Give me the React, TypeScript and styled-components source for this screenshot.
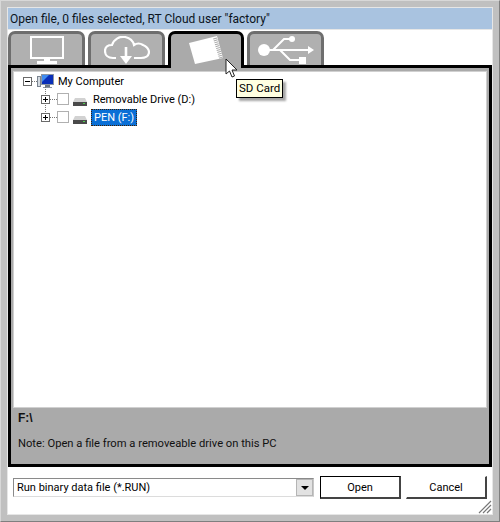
import React from 'react';
import styled, { createGlobalStyle } from 'styled-components';

const Global = createGlobalStyle`
  html, body { margin: 0; padding: 0; background: #c4c4c4; }
  * { box-sizing: border-box; }
`;

/* window shell */
const Frame = styled.div`
  position: relative; width: 500px; height: 522px; padding: 7px 7px 7px;
  background: #c0c0c0; border: 1px solid #7f7f7f; border-top-color: #d8d8d8; border-left-color: #d8d8d8;
  display: flex; flex-direction: column; overflow: hidden;
  font-family: Roboto, "Liberation Sans", Arial, sans-serif; font-size: 11px; color: #000;
`;
const TitleBar = styled.div`
  height: 22px; flex: none; background: #a9c3e0; padding-left: 2px;
  display: flex; align-items: center; font-size: 12px; color: #0b1420;
  box-shadow: 0 0 0 1px #e6e6e6;
`;
const Client = styled.div`
  flex: 1; background: #fff; display: flex; flex-direction: column; min-height: 0; position: relative;
  box-shadow: 0 0 0 1px #e6e6e6;
`;

/* tabs */
const TabRow = styled.div`
  height: 38px; flex: none; display: flex; gap: 3px; padding-top: 1px; position: relative; z-index: 1; margin-bottom: -3px;
`;
const Tab = styled.div<{ $active?: boolean; $w: number }>`
  width: ${p => p.$w}px; height: ${p => (p.$active ? 37 : 34)}px;
  background: ${p => (p.$active ? '#aaaaaa' : '#b0b0b0')};
  border: 3px solid ${p => (p.$active ? '#000' : '#6e6e6e')};
  border-bottom: 0;
  border-radius: 7px 7px 0 0;
  display: flex; align-items: flex-start; justify-content: center;
`;
const TabIcon = styled.svg`
  display: block; margin-top: 2px; flex: none;
`;

/* main panel */
const Panel = styled.div`
  height: 402px; flex: none; border: 3px solid #000; background: #aaaaaa;
  padding: 3px 2px 0; display: flex; flex-direction: column;
`;
const Tree = styled.div`
  height: 337px; flex: none; background: #fff; border: 1px solid #d0d0d0; padding: 0 0 0 9px;
`;
const TreeWrap = styled.div`
  position: relative;
`;
const TreeRow = styled.div<{ $indent: number }>`
  height: 18px; display: flex; align-items: center; padding-left: ${p => p.$indent}px;
`;
const Expander = styled.span`
  width: 9px; height: 9px; flex: none; border: 1px solid #6a6a6a; background: #fff; position: relative;
  &::before { content: ''; position: absolute; left: 1px; right: 1px; top: 3px; height: 1px; background: #000; }
`;
const PlusExpander = styled(Expander)`
  &::after { content: ''; position: absolute; top: 1px; bottom: 1px; left: 3px; width: 1px; background: #000; }
`;
const Dots = styled.span<{ $w: number }>`
  width: ${p => p.$w}px; flex: none; border-top: 1px dotted #777;
`;
const Check = styled.span`
  width: 12px; height: 12px; flex: none; background: #fff; border: 1px solid #b0b0b0; margin-right: 4px;
`;
const Label = styled.span<{ $selected?: boolean; $gap: number }>`
  padding: 1px ${p => (p.$selected ? 3 : 2)}px; margin-left: ${p => p.$gap}px; line-height: 15px; white-space: nowrap;
  ${p => (p.$selected ? 'background: #0a6fd6; color: #fff; outline: 1px dotted #402000; outline-offset: -1px;' : '')}
`;
const Connector = styled.span`
  position: absolute; left: 22px; top: 15px; height: 27px; width: 0; border-left: 1px dotted #777;
`;
const PathLabel = styled.div`
  font-family: "Liberation Sans", Arial, sans-serif;
  font-weight: bold; font-size: 12px; height: 15px; line-height: 15px; margin: 3px 0 0 5px; color: #111;
`;
const Note = styled.div`
  font-size: 11.2px; margin: 10px 0 0 5px; line-height: 15px; color: #111;
`;

/* bottom bar */
const BottomBar = styled.div`
  display: flex; align-items: center; padding: 9px 0 0 5px;
`;
const Combo = styled.div`
  width: 301px; height: 19px; border: 1px solid #8a8a8a; border-right-color: #c8c8c8; border-bottom-color: #dcdcdc;
  display: flex; align-items: center; justify-content: space-between; padding-left: 3px; background: #fff;
`;
const ComboArrow = styled.span`
  width: 17px; height: 17px; background: #e2e2e2; border: 1px solid #b5b5b5; display: flex; align-items: center; justify-content: center;
  &::after { content: ''; border: 4px solid transparent; border-top: 4px solid #000; border-bottom: 0; }
`;
const Button = styled.div<{ $primary?: boolean }>`
  width: 81px; height: 23px; background: #fff; display: flex; align-items: center; justify-content: center;
  margin-left: ${p => (p.$primary ? 6 : 5)}px;
  border: 1px solid ${p => (p.$primary ? '#000' : '#fff')};
  border-right: 2px solid #444; border-bottom: 2px solid #444;
`;

/* overlays */
const Grip = styled.svg`
  position: absolute; right: 0; bottom: 0;
`;
const Tooltip = styled.div`
  position: absolute; left: 235px; top: 78px; height: 19px; padding: 0 2px; z-index: 5;
  background: #ffffe1; border: 1px solid #000; box-shadow: 3px 3px 2px rgba(0,0,0,.35);
  font-size: 11.5px; line-height: 17px;
`;
const Cursor = styled.svg`
  position: absolute; left: 224px; top: 57px; z-index: 6;
`;
const TreeIcon = styled.svg`
  flex: none;
`;
const DriveSvg = styled.svg`
  flex: none; margin: 5px 1px 0 0;
`;

const MonitorIcon = () => (
  <TabIcon width="34" height="28" viewBox="0 0 34 28">
    <rect x="1" y="1" width="32" height="21" fill="none" stroke="#fff" strokeWidth="2" />
    <rect x="14" y="22" width="6" height="3" fill="#fff" />
    <rect x="7" y="25" width="20" height="3" fill="#fff" />
  </TabIcon>
);
const CloudIcon = () => (
  <TabIcon width="46" height="28" viewBox="0 0 46 28">
    <path d="M12 22H9C4 22 1 19 1 15C1 11 4 9 8 9C10 3 16 0 21 1C26 2 29 5 30 9C33 7 36 7 39 9C42 10 45 13 45 16C45 20 41 22 37 22H30"
      fill="none" stroke="#fff" strokeWidth="2.2" />
    <path d="M22 11V25" stroke="#fff" strokeWidth="2.6" />
    <path d="M16 20H28L22 28Z" fill="#fff" />
  </TabIcon>
);
const SdIcon = () => (
  <TabIcon width="34" height="28" viewBox="0 0 34 28">
    <path d="M0 7L28 0L34 22L6 28Z" fill="#fff" />
    <path d="M26 2L32 22" stroke="#a8a8a8" strokeWidth="4" strokeDasharray="1 1" />
  </TabIcon>
);
const UsbIcon = () => (
  <TabIcon width="56" height="28" viewBox="0 0 56 28">
    <circle cx="6" cy="14" r="6" fill="#fff" />
    <path d="M6 14H51" stroke="#fff" strokeWidth="2" />
    <path d="M50 10L56 14L50 18Z" fill="#fff" />
    <path d="M15 14L26 3H34M22 14L32 24H42" fill="none" stroke="#fff" strokeWidth="2" />
    <circle cx="34" cy="3" r="3" fill="#fff" />
    <rect x="41" y="21" width="7" height="7" fill="#fff" />
  </TabIcon>
);
const ComputerIcon = () => (
  <TreeIcon width="18" height="18" viewBox="0 0 18 18">
    <rect x="0.5" y="4.5" width="3" height="10" fill="#d4dae0" stroke="#7a8490" />
    <rect x="4.5" y="2.5" width="12" height="10" fill="#0a2fb8" stroke="#8b95a3" />
    <path d="M5 3H12L5 10Z" fill="#3f8bf0" />
    <rect x="8" y="13" width="5" height="2" fill="#6d7783" />
    <rect x="6" y="15" width="9" height="1" fill="#8b95a3" />
  </TreeIcon>
);
const DriveIcon = () => (
  <DriveSvg width="14" height="8" viewBox="0 0 14 8">
    <path d="M2 0H12L14 4H0Z" fill="#d2d2d2" />
    <rect x="0" y="4" width="14" height="4" fill="#4a4a4a" />
    <rect x="10" y="5" width="2" height="1" fill="#4fd04f" />
  </DriveSvg>
);

export default function App() {
  return (
    <Frame>
      <Global />
      <TitleBar>Open file, 0 files selected, RT Cloud user "factory"</TitleBar>
      <Client>
        <TabRow>
          <Tab $w={77}><MonitorIcon /></Tab>
          <Tab $w={77}><CloudIcon /></Tab>
          <Tab $w={76} $active><SdIcon /></Tab>
          <Tab $w={77}><UsbIcon /></Tab>
        </TabRow>
        <Panel>
          <Tree>
            <TreeWrap>
              <Connector />
              <TreeRow $indent={0}>
                <Expander /><Dots $w={5} /><ComputerIcon />
                <Label $gap={1}>My Computer</Label>
              </TreeRow>
              <TreeRow $indent={18}>
                <PlusExpander /><Dots $w={7} /><Check /><DriveIcon />
                <Label $gap={3}>Removable Drive (D:)</Label>
              </TreeRow>
              <TreeRow $indent={18}>
                <PlusExpander /><Dots $w={7} /><Check /><DriveIcon />
                <Label $selected $gap={3}>PEN (F:)</Label>
              </TreeRow>
            </TreeWrap>
          </Tree>
          <PathLabel>F:\</PathLabel>
          <Note>Note: Open a file from a removeable drive on this PC</Note>
        </Panel>
        <BottomBar>
          <Combo>Run binary data file (*.RUN)<ComboArrow /></Combo>
          <Button $primary>Open</Button>
          <Button>Cancel</Button>
        </BottomBar>
        <Grip width="14" height="14" viewBox="0 0 14 14">
          <path d="M1 13L13 1M5 13L13 5M9 13L13 9" stroke="#777" strokeWidth="1.2" />
        </Grip>
      </Client>
      <Tooltip>SD Card</Tooltip>
      <Cursor width="13" height="21" viewBox="0 0 13 21">
        <path d="M1 1V16L4.5 13L7 19L9.5 18L7 12H12Z" fill="#fff" stroke="#222" strokeWidth="1" />
      </Cursor>
    </Frame>
  );
}
